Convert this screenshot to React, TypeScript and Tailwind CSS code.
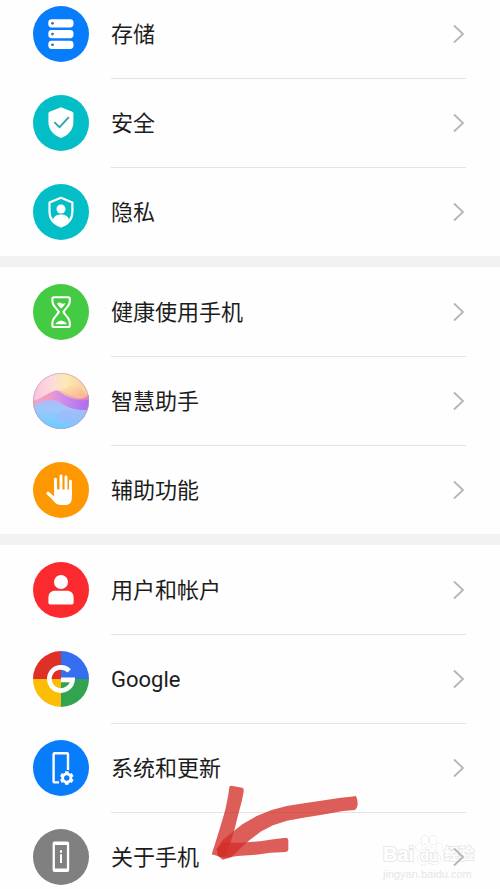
import type { ReactNode } from "react";

type Item = {
  label: string;
  color: string;
  icon: ReactNode;
};

const storage = (
  <g>
    {[13.2, 24, 34.7].map((y) => (
      <g key={y}>
        <rect x="15.3" y={y} width="25.2" height="8.2" rx="3.4" fill="#fff" />
        <circle cx="19.5" cy={y + 4.1} r="1.4" fill="#4b6f96" />
      </g>
    ))}
  </g>
);

const security = (
  <g>
    <path
      d="M28 12.2 39.3 16.8Q40.4 17.3 40.4 18.6V27C40.4 34.5 35.5 40.5 28 42.9 20.5 40.5 15.4 34.5 15.4 27V18.6Q15.4 17.3 16.5 16.8Z"
      fill="#fff"
    />
    <path d="m21.3 27.2 5.3 5 9.2-10" fill="none" stroke="#2aa5ae" strokeWidth="1.8" />
  </g>
);

const privacy = (
  <g>
    <path
      d="M28 13.7 39.4 18.5V27.5C39.4 34.5 35 40 28 42.4 21 40 16.5 34.5 16.5 27.5V18.5Z"
      fill="none"
      stroke="#fff"
      strokeWidth="2.2"
      strokeLinejoin="round"
    />
    <circle cx="28" cy="25" r="4.5" fill="#fff" />
    <path d="M20 35.5C21 32 24 30.4 28 30.4S35 32 36 35.5C34 39 31.5 41 28 42.4 24.5 41 22 39 20 35.5Z" fill="#fff" />
  </g>
);

const hourglass = (
  <g>
    <path
      d="M21 13.2H35.2Q36.8 13.2 36.8 14.8V17C36.8 22 32 24.7 30.4 28 32 31.3 36.8 34 36.8 39V41.5Q36.8 43 35.2 43H21Q19.4 43 19.4 41.5V39C19.4 34 24.2 31.3 25.8 28 24.2 24.7 19.4 22 19.4 17V14.8Q19.4 13.2 21 13.2Z"
      fill="none"
      stroke="#fff"
      strokeWidth="2.1"
    />
    <path
      d="M24 19.5Q26 17.8 28.2 19.2 30.5 20.2 32.5 19 31.5 22 28.1 24.4 25 22 24 19.5ZM22.5 40.2Q23.2 37.6 28.1 36.4 33 37.6 33.7 40.2Z"
      fill="#fff"
    />
  </g>
);

const assistant = (
  <g>
    <defs>
      <clipPath id="orb">
        <circle cx="28" cy="28" r="28" />
      </clipPath>
      <linearGradient id="sky" x1="0" y1=".3" x2="1" y2=".2">
        <stop offset="0" stopColor="#fac3dd" />
        <stop offset=".35" stopColor="#fddadb" />
        <stop offset=".6" stopColor="#fde9b3" />
        <stop offset="1" stopColor="#fbc99a" />
      </linearGradient>
      <linearGradient id="band" x1="0" y1="0" x2="1" y2="0">
        <stop offset="0" stopColor="#f3a3bd" />
        <stop offset=".3" stopColor="#ee9cc6" />
        <stop offset=".55" stopColor="#cf8bec" />
        <stop offset="1" stopColor="#ab6bee" />
      </linearGradient>
      <linearGradient id="crest" x1="0" y1="0" x2="1" y2="1">
        <stop offset="0" stopColor="#fde8aa" />
        <stop offset="1" stopColor="#fa9f8b" />
      </linearGradient>
      <linearGradient id="ridge" x1="0" y1="0" x2="1" y2=".4">
        <stop offset="0" stopColor="#f5a9b6" />
        <stop offset="1" stopColor="#f18da9" />
      </linearGradient>
      <linearGradient id="sea" x1=".5" y1="0" x2=".4" y2="1">
        <stop offset="0" stopColor="#b9b4fa" />
        <stop offset=".35" stopColor="#9cc8fb" />
        <stop offset="1" stopColor="#6bccff" />
      </linearGradient>
    </defs>
    <g clipPath="url(#orb)">
      <rect width="56" height="56" fill="url(#sky)" />
      <path d="M0 28C8 26 14 20 21 18S34 21 41 24 51 26 56 21V56H0Z" fill="url(#band)" />
      <path d="M25 17C31 17 36 11 43 13S51 21 56 24C46 28 35 26 25 17Z" fill="url(#crest)" opacity=".8" />
      <path d="M30 21C38 26 48 27 56 23V27C46 28 38 27 30 21Z" fill="url(#ridge)" opacity=".6" />
      <path d="M0 34C9 26 19 25 26 29S39 38 56 37V56H0Z" fill="url(#sea)" />
      <path d="M22 44C28 37 33 36 39 37S49 38 56 37V43C46 51 30 54 22 44Z" fill="#a9b0fa" opacity=".4" />
    </g>
    <circle cx="28" cy="28" r="27.6" fill="none" stroke="#b49ab8" strokeWidth=".7" strokeOpacity=".8" />
  </g>
);

const hand = (
  <g fill="none" stroke="#fff" strokeLinecap="round">
    <path d="M22.5 17.2V31M28 14V29M33 15V29M37.5 19.3V32" strokeWidth="2.9" />
    <path d="M15 31.2 22 37.5" strokeWidth="3.2" />
    <path
      d="M21.1 27.5H38.9V35.5C38.9 40.5 36.5 43 32 43H28.5C24.5 43 22.5 41.5 20.5 38.9L15.5 32.5 21.1 35Z"
      fill="#fff"
      stroke="none"
    />
  </g>
);

const user = (
  <g fill="#fff">
    <circle cx="28" cy="20" r="7" />
    <path d="M15.4 36C15.4 31 18 28.8 22.5 28.8H33.5C38 28.8 40.6 31 40.6 36V40.8Q40.6 42.5 38.9 42.5H17.1Q15.4 42.5 15.4 40.8Z" />
  </g>
);

const google = (
  <g>
    <path d="M28 28V0A28 28 0 0 0 0 28Z" fill="#df3028" />
    <path d="M28 28H56A28 28 0 0 0 28 0Z" fill="#356ff0" />
    <path d="M28 28V56A28 28 0 0 0 56 28Z" fill="#32a450" />
    <path d="M28 28H0A28 28 0 0 0 28 56Z" fill="#fbbd05" />
    <path d="M36.2 19.8A11.6 11.6 0 1 0 39.5 28.8H28" fill="none" stroke="#fff" strokeWidth="4.7" />
  </g>
);

const system = (
  <g>
    <path
      d="M26 42.4H21.6Q20.6 42.4 20.6 41.4V14.2Q20.6 13.2 21.6 13.2H34Q35 13.2 35 14.2V30"
      fill="none"
      stroke="#fff"
      strokeWidth="2.4"
    />
    <circle cx="33.8" cy="38" r="4.1" fill="none" stroke="#fff" strokeWidth="2.8" />
    <path
      d="M33.8 31.2V34M33.8 42V44.8M27.9 34.6 30.3 36M37.3 40 39.7 41.4M27.9 41.4 30.3 40M37.3 36 39.7 34.6"
      stroke="#fff"
      strokeWidth="3.6"
    />
  </g>
);

const about = (
  <g>
    <path
      d="M21.5 12.6H34.3Q36.2 12.6 36.2 14.5V41Q36.2 42.9 34.3 42.9H21.5Q19.6 42.9 19.6 41V14.5Q19.6 12.6 21.5 12.6ZM21.9 16V39.4H33.9V16Z"
      fill="#fff"
      fillRule="evenodd"
    />
    <path d="M28 21.3V23.7M28 25.3V34" stroke="#fff" strokeWidth="2" />
  </g>
);

const groups: Item[][] = [
  [
    { label: "存储", color: "#087dfc", icon: storage },
    { label: "安全", color: "#04bec7", icon: security },
    { label: "隐私", color: "#04bec7", icon: privacy },
  ],
  [
    { label: "健康使用手机", color: "#45cb43", icon: hourglass },
    { label: "智慧助手", color: "#f8c5e4", icon: assistant },
    { label: "辅助功能", color: "#fe9802", icon: hand },
  ],
  [
    { label: "用户和帐户", color: "#fb2a2f", icon: user },
    { label: "Google", color: "#ffffff", icon: google },
    { label: "系统和更新", color: "#087dfc", icon: system },
    { label: "关于手机", color: "#808080", icon: about },
  ],
];

function Row({ item, first }: { item: Item; first: boolean }) {
  return (
    <button
      type="button"
      className="relative z-10 flex h-[89px] w-full items-center gap-[22px] pl-[33px] pr-[34px] text-left"
    >
      <svg viewBox="0 0 56 56" className="size-14 shrink-0" aria-hidden="true">
        <circle cx="28" cy="28" r="28" fill={item.color} />
        {item.icon}
      </svg>
      <span
        className={
          first
            ? "flex h-full flex-1 items-center justify-between border-t border-transparent"
            : "flex h-full flex-1 items-center justify-between border-t border-[#e3e3e3]"
        }
      >
        <span className="pt-0.5 text-[22px] leading-8">{item.label}</span>
        <svg viewBox="0 0 14 20" className="h-5 w-3.5" aria-hidden="true">
          <path d="m2 1.5 9 8.5-9 8.5" fill="none" stroke="#b5b5b5" strokeWidth="1.8" />
        </svg>
      </span>
    </button>
  );
}

function Arrow() {
  return (
    <svg
      viewBox="60 45 450 231"
      className="pointer-events-none absolute -top-7 left-[210px] z-20 w-[150px]"
      aria-hidden="true"
    >
      <g fill="#d32f2a" fillOpacity=".78">
        <path d="M118 54Q121 48 128 51L157 56Q163 59 161 68L156 94 143 143 134 180 125 210 106 262 90 263 65 256 75 225 91 173 106 122 115 77Z" />
        <path d="M498 81Q503 90 503 107 501 119 495 123L460 126 396 137 340 146 291 155 249 169 214 187 180 212 150 239 124 265 98 272 84 260 80 240 98 213 128 189 157 166 200 141 245 123 290 111 342 103 393 95 447 87 482 83Z" />
        <path d="M99 221 156 221 216 216 250 211 289 206Q296 208 295 216L295 242Q294 248 287 249L242 251 198 257 143 261 105 266 87 263 80 239Z" />
      </g>
    </svg>
  );
}

function Watermark() {
  return (
    <div className="pointer-events-none absolute right-[26px] top-[22px] w-[91px] font-['Liberation_Sans','Noto_Sans_CJK_SC',sans-serif] text-white">
      <div className="flex h-8 items-end justify-between font-bold [-webkit-text-stroke:2px_#e8e8e8] [paint-order:stroke]">
        <span className="text-[20px] leading-6">Bai</span>
        <span className="relative flex h-8 w-7 items-end justify-center">
          <svg viewBox="0 0 28 32" className="absolute inset-0 size-full" fill="#fff" stroke="#e4e4e4" aria-hidden="true">
            <ellipse cx="4" cy="13" rx="3" ry="4" />
            <ellipse cx="10" cy="6" rx="3.4" ry="4.6" />
            <ellipse cx="18" cy="6" rx="3.4" ry="4.6" />
            <ellipse cx="24.3" cy="13" rx="3" ry="4" />
            <path d="M14 13C9 13 8 18 5 20S1 28 6 30 11 29 14 29 18 32 22 30 27 23 23 20 19 13 14 13Z" />
          </svg>
          <span className="relative text-[14px] leading-5">du</span>
        </span>
        <span className="text-[15px] leading-6">经验</span>
      </div>
      <div className="text-[11px] leading-4 text-[#e6e6e6]">jingyan.baidu.com</div>
    </div>
  );
}

export default function App() {
  return (
    <main className="h-screen overflow-hidden bg-[#f2f2f2] font-[Roboto,'Noto_Sans_CJK_SC',sans-serif] text-[#1c1c1c]">
      <div className="-mt-[11px] flex flex-col gap-[11px]">
        {groups.map((items, g) => (
          <ul key={g} className="bg-[#fefefe]">
            {items.map((item, i) => (
              <li key={item.label} className="relative">
                <Row item={item} first={i === 0} />
                {item.label === "关于手机" && (
                  <>
                    <Arrow />
                    <Watermark />
                  </>
                )}
              </li>
            ))}
          </ul>
        ))}
      </div>
    </main>
  );
}
